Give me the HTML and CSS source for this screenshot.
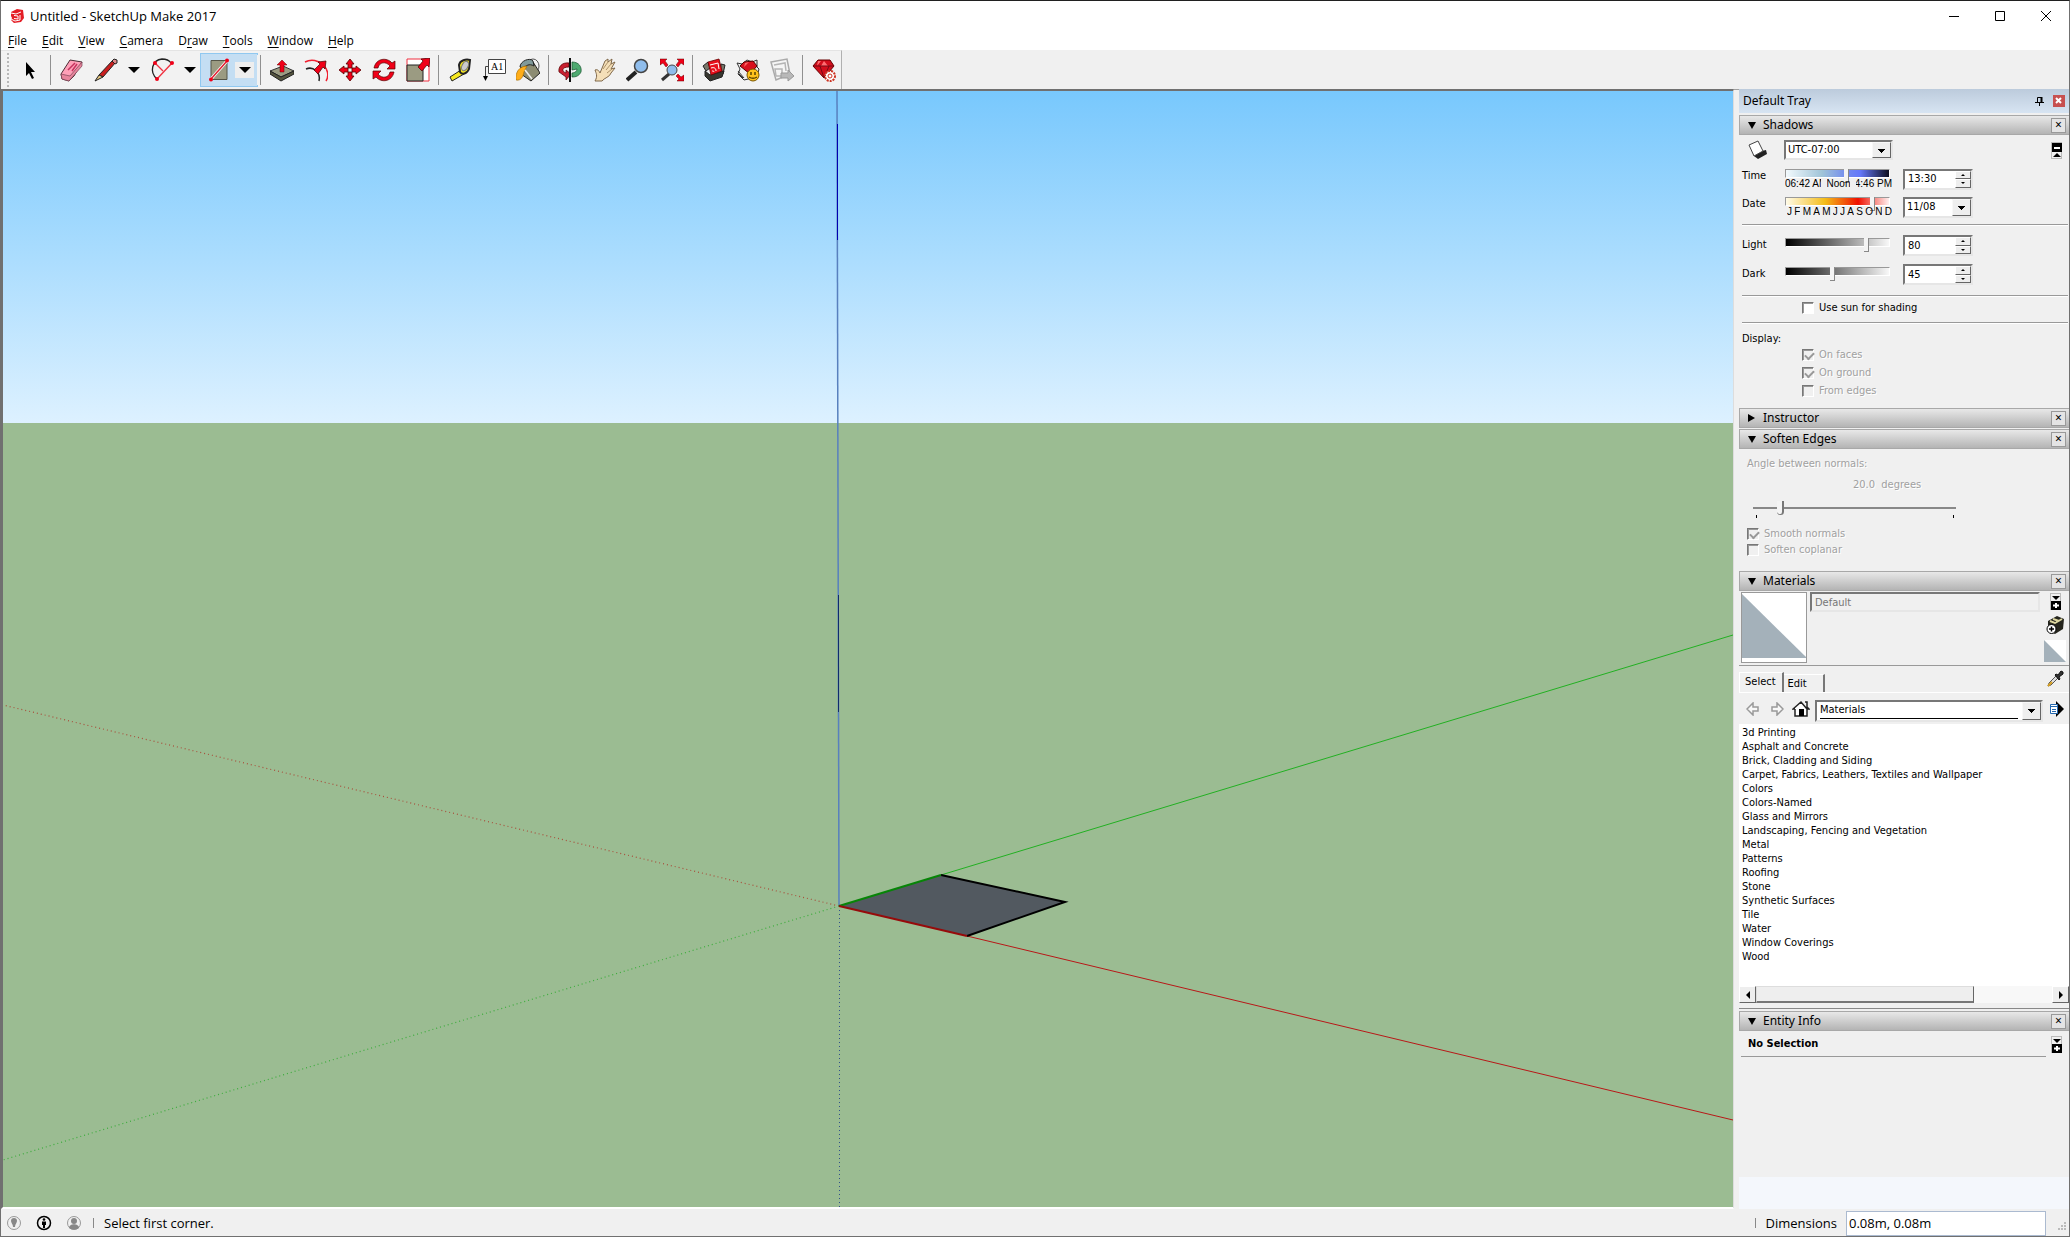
FILE: index.html
```
<!DOCTYPE html>
<html lang="en">
<head>
<meta charset="utf-8">
<title>Untitled - SketchUp Make 2017</title>
<link rel="stylesheet" href="styles.css">
</head>
<body>
<div class="window">
  <header class="titlebar">
    <svg class="logo" viewBox="0 0 14 14"><path fill="#e41e26" d="M1 3 7 0l6 1 1 8-3 4-7 1-3-3 1-2-1-2z"/><path fill="none" stroke="#fff" d="m1 4 5 1 5-2M4 6.500l4 .5v3l-4-.5M10 6v5M1 10l4 2 5-1"/></svg>
    <h1 class="title">Untitled - SketchUp Make 2017</h1>
    <div class="window-buttons">
      <button aria-label="Minimize"><svg viewBox="0 0 12 12"><path d="M1 6.500h10"/></svg></button>
      <button aria-label="Maximize"><svg viewBox="0 0 12 12"><path d="M1.500 1.500h9v9h-9z"/></svg></button>
      <button aria-label="Close"><svg viewBox="0 0 12 12"><path d="m1 1 10 10M11 1 1 11"/></svg></button>
    </div>
  </header>

  <nav class="menubar">
    <button><u>F</u>ile</button><button><u>E</u>dit</button><button><u>V</u>iew</button><button><u>C</u>amera</button><button>D<u>r</u>aw</button><button><u>T</u>ools</button><button><u>W</u>indow</button><button><u>H</u>elp</button>
  </nav>

  <div class="toolbar-row">
    <div class="toolbar">
      <span class="grip"></span>
      <button class="tool" aria-label="Select"><svg viewBox="0 0 24 24"><path d="M8 4v14l3-3 3 6 2-1-3-6h4z"/></svg></button>
      <span class="sep"></span>
      <button class="tool" aria-label="Eraser"><svg viewBox="0 0 24 24"><path fill="#ffa0b8" stroke="#4a2a33" d="m1 16 9-14 12 2-8 14-5 5-7-2z"/><path fill="#e8859d" stroke="#7a4454" stroke-width=".7" d="m1 16 9 2 12-14v4L9 23l-7-2z"/><path fill="none" stroke="#c6335f" stroke-width="1.500" d="m8 12 7-7M12 13l5-7"/></svg></button>
      <button class="tool" aria-label="Line"><svg viewBox="0 0 24 24"><path fill="#c81e1e" stroke="#222" d="M5 17 19 2l3 2L9 19z"/><path fill="#e8c880" stroke="#222" d="m1 23 4-6 4 2z"/><path fill="#d88" stroke="#222" d="m18 3 2-2 3 1v3l-2 1z"/></svg></button>
      <button class="drop" aria-label="Line tools"></button>
      <button class="tool" aria-label="Arc"><svg viewBox="0 0 24 24"><path fill="none" stroke="#222" stroke-width="1.300" d="M7 21C-1 14 2 2 12 1c4 0 7 1 9 4"/><path fill="none" stroke="#f03040" stroke-width="1.300" d="m7 21 15-16M5 5l8 8"/><g fill="#f00018"><circle cx="5" cy="5" r="2"/><circle cx="22" cy="5" r="2"/><circle cx="7" cy="21" r="2"/></g></svg></button>
      <button class="drop" aria-label="Arc tools"></button>
      <div class="tool-active">
        <button class="tool" aria-label="Rectangle"><svg viewBox="0 0 24 24"><path fill="#9b9b82" stroke="#555548" d="M5 2.500h16v19H5z"/><path stroke="#fff" stroke-width="3" d="M5 21 21 3"/><path stroke="#e02030" stroke-width="1.500" d="M5 21 21 3"/><circle cx="5" cy="21.500" r="2" fill="#f00018"/><circle cx="21" cy="2.500" r="2" fill="#f00018"/></svg></button>
        <button class="drop" aria-label="Shape tools"></button>
      </div>
      <span class="sep"></span>
      <button class="tool" aria-label="Push/Pull"><svg viewBox="0 0 24 24"><path fill="#9b9b82" stroke="#333" d="m0 13 13-5 11 5-13 6z"/><path fill="#55553f" stroke="#222" d="M0 13v3l11 7 13-7v-3l-13 6z"/><path fill="#f00018" stroke="#600" stroke-width=".5" d="M12 2 7 7h3v7h4V7h3z"/></svg></button>
      <button class="tool" aria-label="Offset"><svg viewBox="0 0 24 24"><path fill="none" stroke="#f02030" stroke-width="1.500" d="M1 4c13-7 28 8 21 19"/><path fill="none" stroke="#222" stroke-width="1.500" d="M2 11c7-3 15 3 13 12"/><path fill="#f00018" stroke="#400" stroke-width=".7" d="m22 3-8 1 2 2-6 6 4 4 5-7 2 2z"/></svg></button>
      <button class="tool" aria-label="Move"><svg viewBox="0 0 24 24"><path fill="#f00018" stroke="#500" stroke-width=".8" d="m12 1 4 5h-2v4h-4V6H8zM12 23l4-5h-2v-4h-4v4H8zM1 12l5-4v2h4v4H6v2zM23 12l-5-4v2h-4v4h4v2z"/></svg></button>
      <button class="tool" aria-label="Rotate"><svg viewBox="0 0 24 24"><path fill="#f00018" stroke="#500" stroke-width=".7" d="M2 10C4 0 15-1 20 5l3-2v8h-8l3-3C14 3 7 4 6 10zM22 14c-2 10-13 11-18 5l-3 2v-8h8l-3 3c4 5 11 4 12-2z"/></svg></button>
      <button class="tool" aria-label="Scale"><svg viewBox="0 0 24 24"><path fill="#fff" stroke="#f03040" d="M1 1h22v22H1z"/><path fill="#9b9b82" stroke="#222" d="M1 7h16v16H1z"/><path fill="#f00018" stroke="#400" stroke-width=".7" d="m24 0-9 1 2 2-5 6 4 4 5-6 2 2z"/></svg></button>
      <span class="sep"></span>
      <button class="tool" aria-label="Tape Measure"><svg viewBox="0 0 24 24"><path fill="#f6e820" stroke="#222" d="m2 19 11-7 3 4-12 7z"/><path fill="#f6e820" stroke="#222" stroke-width="2" d="M11 7c1-5 7-6 11-5l-1 9c-2 5-7 6-9 3z"/><ellipse cx="17" cy="8" rx="3" ry="5" transform="rotate(25 17 8)" fill="#ccc" stroke="#777"/></svg></button>
      <button class="tool" aria-label="Text"><svg viewBox="0 0 24 24"><path fill="#fff" stroke="#444" d="M6.500 1.500h17v14h-17z"/><path fill="none" stroke="#444" d="M6 8.500H3.500V19"/><path d="M1 18h5l-2.500 5z"/><text x="9" y="12" font-family="Liberation Serif" font-size="10">A1</text></svg></button>
      <button class="tool" aria-label="Paint Bucket"><svg viewBox="0 0 24 24"><ellipse cx="17" cy="8" rx="6" ry="7" fill="none" stroke="#555"/><path fill="#8c8c72" stroke="#222" d="m5 8 12-4 7 11-9 8-10-7z"/><path fill="#809a9a" stroke="#222" d="M4 9C4 3 14-1 17 3l1 5c-5-3-8 0-11 2z"/><path fill="#ffad18" stroke="#9b6500" stroke-width=".6" d="M11 8C3 8-1 15 0 22c5 1 7-3 8-8z"/><path stroke="#eee" stroke-width="1.500" d="m9 12 7 9"/></svg></button>
      <span class="sep"></span>
      <button class="tool" aria-label="Orbit"><svg viewBox="0 0 24 24"><path fill="#c82030" stroke="#500" stroke-width=".7" d="M11 5C4 4 0 9 1 14l7 5v3l5-6-5-4v3C3 13 4 9 11 9z"/><path fill="#4eaa70" stroke="#17552e" stroke-width=".7" d="M14 4c7 0 10 5 9 10-2 4-5 5-9 5v-4c3 0 5-2 5-4l-5 1z"/><path stroke="#111" stroke-width="2" d="M12 0v24"/></svg></button>
      <button class="tool" aria-label="Pan"><svg viewBox="0 0 24 24"><path fill="#f4dfb8" stroke="#80694b" d="M3 23c3-5 1-8 0-11 3-1 4 1 5 3L13 3l3-2v3l4-3-1 5 4-2-4 7 4-1-4 5c-1 4-7 5-9 8z"/><path stroke="#ad9269" fill="none" d="m11 11 5-7M14 12l5-6M15 15l5-4"/></svg></button>
      <button class="tool" aria-label="Zoom"><svg viewBox="0 0 24 24"><path stroke="#222" stroke-width="4" d="m1 22 9-8"/><circle cx="15" cy="8" r="6.500" fill="#8fbdec" stroke="#444" stroke-width="1.500"/></svg></button>
      <button class="tool" aria-label="Zoom Extents"><svg viewBox="0 0 24 24"><path stroke="#333" stroke-width="3" d="m2 22 7-6"/><circle cx="12" cy="12" r="5" fill="#8fbdec" stroke="#444"/><path fill="#f00018" stroke="#600" stroke-width=".5" d="M0 1h7L5 3l3 4-2 2-3-4-3 2zM24 1h-7l2 2-3 4 2 2 3-4 3 2zM24 23h-7l2-2-3-3 2-2 3 3 3-2z"/></svg></button>
      <span class="sep"></span>
      <button class="tool" aria-label="3D Warehouse"><svg viewBox="0 0 24 24"><path fill="#77776a" stroke="#222" d="m1 8 5-4 2 6-4 3zM19 6l4 1-2 9-3-1z"/><path fill="#383830" stroke="#222" d="m3 13 5 4 14-4-2 6-12 4-5-5z"/><path fill="#e8101c" stroke="#600" stroke-width=".8" d="m6 4 11-3 3 12-11 4z"/><path fill="none" stroke="#fff" d="m8 7 8-2 1 6M9 10c3-1 5 0 5 3M10 13c1 0 2 0 2 1"/></svg></button>
      <button class="tool" aria-label="Extension Warehouse"><svg viewBox="0 0 24 24"><path fill="#eee" stroke="#333" d="m1 5 5 1 5-4 5 2 5-2v7l2 2-2 8-13 3-6-6 2-5z"/><path fill="#d8101e" stroke="#500" d="m4 8 4-4 9-1 4 5-7 8z"/><path fill="#f66" d="m9 5-1 4 5-5z"/><path stroke="#333" d="m2 13 6 7M3 16l4 4"/><circle cx="17" cy="17" r="6" fill="#ffc21c" stroke="#7a5700"/><path fill="none" stroke="#5a4300" stroke-width="1.500" d="M15 14v3M19 14v3M13 19c3 2 5 2 8 0"/></svg></button>
      <button class="tool" aria-label="Send to LayOut"><svg viewBox="0 0 24 24"><path fill="#f5f5f5" stroke="#aaa" stroke-width="1.500" d="m1 4 16-3 3 15-14 6z"/><path fill="none" stroke="#b5b5b5" stroke-width="1.500" d="m4 7 11-2 1 8M5 11h7v7H6z"/><path fill="#b8b8b8" stroke="#999" d="M11 15h7v-3l6 6-6 5v-3h-7z"/></svg></button>
      <span class="sep"></span>
      <button class="tool" aria-label="Extension Manager"><svg viewBox="0 0 24 24"><path fill="#d20e1c" stroke="#600" d="m1 8 5-6h12l4 6-10 12z"/><path fill="#ff6d72" d="m6 3-1 5 4-5zM12 3l-3 5h7z"/><path fill="none" stroke="#780b14" d="M1 8h21M8 8l4 12 5-12"/><circle cx="18" cy="18" r="5" fill="#fff" stroke="#c32" stroke-width="2" stroke-dasharray="2 1"/><circle cx="18" cy="18" r="2" fill="none" stroke="#c32"/></svg></button>
    </div>
  </div>

  <main class="workspace">
    <section class="viewport" aria-label="Model view">
      <svg class="scene" viewBox="0 0 1730 1116" preserveAspectRatio="none">
        <defs><linearGradient id="sky" x1="0" y1="0" x2="0" y2="1"><stop offset="0" stop-color="#78c8fd"/><stop offset="1" stop-color="#ddf1ff"/></linearGradient></defs>
        <path fill="url(#sky)" d="M0 0h1730v332H0z"/>
        <path fill="#9bbc92" d="M0 332h1730v784H0z"/>
        <path stroke="#5880be" stroke-width="1.500" d="m834 0 2 815"/>
        <path stroke="#0000b0" d="M834.500 33v116"/>
        <path stroke="#102a6c" d="M835.500 504v117"/>
        <path stroke="#30508a" stroke-dasharray="1 3" d="M836.500 815v301"/>
        <path stroke="#a8503c" stroke-width="1.200" stroke-dasharray="1 3" d="M836 815 0 614"/>
        <path stroke="#3cac3c" stroke-width="1.200" stroke-dasharray="1 3" d="M836 815 0 1069"/>
        <path stroke="#22b022" d="m938 784 792-240"/>
        <path stroke="#b81818" d="m964 845 766 184"/>
        <path fill="#525960" d="m836 815 102-31 124 27-98 34z"/>
        <path fill="none" stroke="#000" stroke-width="2" d="m938 784 124 27-98 34"/>
        <path stroke="#078507" stroke-width="2" d="m836 815 102-31"/>
        <path stroke="#960b0b" stroke-width="2" d="m836 815 128 30"/>
      </svg>
    </section>

    <aside class="tray">
      <div class="tray-head"><h2>Default Tray</h2>
        <button class="pin" aria-label="Auto hide"><svg viewBox="0 0 10 10"><path fill="none" stroke="#000" d="M2.500 6V1.500h4V6M0 6.500h9M4.500 7v3"/><path stroke="#000" stroke-width="2" d="M6.500 1v5"/></svg></button>
        <button class="tray-close" aria-label="Close tray"><svg viewBox="0 0 8 8"><path stroke="#fff" stroke-width="2" d="m1 1 5 5M6 1 1 6"/></svg></button>
      </div>

      <section class="panel">
        <h3 class="panel-head"><button class="fold">Shadows</button><button class="x" aria-label="Close Shadows">×</button></h3>
        <div class="shadows">
          <div class="field-row first">
            <svg class="shadow-icon" viewBox="0 0 20 20"><path fill="#222" d="m5 13 13-3 1 4-9 5-4-3z"/><path fill="#fff" stroke="#444" d="m1 5 9-4 5 10-9 5z"/></svg>
            <span class="combo zone"><select aria-label="Time zone"><option>UTC-07:00</option></select></span>
            <button class="mini detail-toggle" aria-label="Hide details"><svg viewBox="0 0 10 16"><path d="M0 0h10v9H0z"/><path stroke="#fff" stroke-width="2" d="M2 5h6"/><path d="m5 10 4 4H1z"/></svg></button>
          </div>
          <div class="field-row"><label for="time">Time</label>
            <span class="scale"><input class="range time" id="time" type="range" value="59"><span class="marks"><i>06:42 AM</i><i>Noon</i><i class="end">04:46 PM</i></span></span>
            <span class="spin"><input aria-label="Time value" value="13:30"><button aria-label="Later"></button><button class="down" aria-label="Earlier"></button></span></div>
          <div class="field-row"><label for="date">Date</label>
            <span class="scale"><input class="range date" id="date" type="range" value="86"><span class="marks months"><i>J</i><i>F</i><i>M</i><i>A</i><i>M</i><i>J</i><i>J</i><i>A</i><i>S</i><i>O</i><i>N</i><i>D</i></span></span>
            <span class="combo day"><select aria-label="Date value"><option>11/08</option></select></span></div>
          <hr>
          <div class="field-row shade"><label for="light">Light</label>
            <span class="scale"><input class="range grey" id="light" type="range" value="80"></span>
            <span class="spin"><input aria-label="Light value" value="80"><button aria-label="More light"></button><button class="down" aria-label="Less light"></button></span></div>
          <div class="field-row shade"><label for="dark">Dark</label>
            <span class="scale"><input class="range grey" id="dark" type="range" value="45"></span>
            <span class="spin"><input aria-label="Dark value" value="45"><button aria-label="More dark"></button><button class="down" aria-label="Less dark"></button></span></div>
          <hr>
          <label class="check sun"><input type="checkbox">Use sun for shading</label>
          <hr>
          <p class="display">Display:</p>
          <label class="check off"><input type="checkbox" checked disabled>On faces</label>
          <label class="check off"><input type="checkbox" checked disabled>On ground</label>
          <label class="check off"><input type="checkbox" disabled>From edges</label>
        </div>
      </section>

      <section class="panel">
        <h3 class="panel-head"><button class="fold closed">Instructor</button><button class="x" aria-label="Close Instructor">×</button></h3>
      </section>

      <section class="panel">
        <h3 class="panel-head"><button class="fold">Soften Edges</button><button class="x" aria-label="Close Soften Edges">×</button></h3>
        <div class="soften off">
          <label for="angle">Angle between normals:</label>
          <output for="angle">20.0&nbsp; degrees</output>
          <div class="angle"><input id="angle" type="range" value="12" disabled></div>
          <label class="check"><input type="checkbox" checked disabled>Smooth normals</label>
          <label class="check"><input type="checkbox" disabled>Soften coplanar</label>
        </div>
      </section>

      <section class="panel">
        <h3 class="panel-head"><button class="fold">Materials</button><button class="x" aria-label="Close Materials">×</button></h3>
        <div class="material">
          <div class="swatch"><svg viewBox="0 0 64 66" preserveAspectRatio="none"><path fill="#a4b1ba" d="m0 0 64 65v1H0z"/></svg></div>
          <input class="material-name" aria-label="Material name" value="Default" disabled>
          <div class="side">
            <button class="mini" aria-label="Secondary pane"><svg viewBox="0 0 10 16"><path d="M1 2h8L5 6zM0 7h10v9H0z"/><path stroke="#fff" stroke-width="2" d="M2 11.500h6M5 9v5"/></svg></button>
            <button class="plain" aria-label="Create material"><svg viewBox="0 0 18 18"><path fill="#25251d" d="m2 5 9-5 7 3-1 10-8 5-7-3z"/><path stroke="#dcd6a0" stroke-width="2" d="m4 5 5 2 7-4M7 3l6 2"/><circle cx="5.500" cy="13" r="4.500" fill="#fff" stroke="#000"/><path stroke="#000" stroke-width="1.500" d="M3 13h5M5.500 10.500v5"/></svg></button>
            <button class="plain big" aria-label="Default material"><svg viewBox="0 0 22 22"><path fill="#fff" d="M0 0h22v22H0z"/><path fill="#a4b1ba" d="m0 0 22 22H0z"/></svg></button>
          </div>
        </div>
        <div class="tabs"><button class="tab current">Select</button><button class="tab">Edit</button>
          <button class="plain pick" aria-label="Sample paint"><svg viewBox="0 0 18 18"><path fill="#ddd" stroke="#555" d="m2 16 1-3 7-7 2 2-7 7z"/><path stroke="#d8a020" stroke-width="2" d="m2 16 4-4"/><path fill="#333" stroke="#111" d="m9 5 1-1 2 1 3-4 2 1v2l-4 3 1 2-1 1z"/></svg></button></div>
        <div class="browse">
          <button class="plain" aria-label="Back"><svg viewBox="0 0 14 14"><path fill="#f8f8f8" stroke="#999" stroke-width="1.500" d="m1 7 6-6v4h5v4H7v4z"/></svg></button>
          <button class="plain" aria-label="Forward"><svg viewBox="0 0 14 14"><path fill="#f8f8f8" stroke="#999" stroke-width="1.500" d="M13 7 7 1v4H2v4h5v4z"/></svg></button>
          <button class="plain home" aria-label="In model"><svg viewBox="0 0 18 18"><path fill="#fff" stroke="#222" stroke-width="1.500" d="M3 9v7h12V9L9 2 1 9h2M13 2h2v5l2 2h-2"/><path d="M7 9h5v7H7z"/></svg></button>
          <span class="combo library"><select aria-label="Library"><option>Materials</option></select></span>
          <button class="plain more" aria-label="Details"><svg viewBox="0 0 16 16"><path d="M7 0v4H4v9h3v3l8-8z"/><path fill="#fff" stroke="#2468b0" d="M1.500 3.500h7v9h-7z"/><path stroke="#2468b0" d="M1 5.500h8M3 8.500h4M3 10.500h4"/></svg></button>
        </div>
        <div class="library-box">
          <ul class="library-list">
            <li>3d Printing</li><li>Asphalt and Concrete</li><li>Brick, Cladding and Siding</li><li>Carpet, Fabrics, Leathers, Textiles and Wallpaper</li><li>Colors</li><li>Colors-Named</li><li>Glass and Mirrors</li><li>Landscaping, Fencing and Vegetation</li><li>Metal</li><li>Patterns</li><li>Roofing</li><li>Stone</li><li>Synthetic Surfaces</li><li>Tile</li><li>Water</li><li>Window Coverings</li><li>Wood</li>
          </ul>
          <div class="scrollbar"><button aria-label="Scroll left"></button><span class="thumb"></span><button class="right" aria-label="Scroll right"></button></div>
        </div>
      </section>

      <section class="panel entity">
        <h3 class="panel-head"><button class="fold">Entity Info</button><button class="x" aria-label="Close Entity Info">×</button></h3>
        <div class="entity-row"><strong>No Selection</strong><button class="mini" aria-label="Show details"><svg viewBox="0 0 10 16"><path d="M1 2h8L5 6zM0 7h10v9H0z"/><path stroke="#fff" stroke-width="2" d="M2 11.500h6M5 9v5"/></svg></button></div>
      </section>
      <div class="tray-foot"></div>
    </aside>
  </main>

  <footer class="statusbar">
    <button class="status-icon" aria-label="Geo-location"><svg viewBox="0 0 16 16"><circle cx="8" cy="8" r="6.500" fill="none" stroke="#999"/><path fill="#888" d="M8 3a3 3 0 0 0-3 3c0 2 2 3 2 6h2c0-3 2-4 2-6a3 3 0 0 0-3-3"/></svg></button>
    <button class="status-icon" aria-label="Credits"><svg viewBox="0 0 16 16"><circle cx="8" cy="8" r="6.500" fill="none" stroke="#000" stroke-width="1.500"/><circle cx="8" cy="4.500" r="1.300"/><path d="M6 6.500h4V10H9v3H7v-3H6z"/></svg></button>
    <button class="status-icon" aria-label="Sign in"><svg viewBox="0 0 16 16"><circle cx="8" cy="8" r="6.500" fill="none" stroke="#999"/><circle cx="8" cy="6" r="3" fill="#888"/><path fill="#888" d="M3 13c0-5 10-5 10 0-3 2-7 2-10 0"/></svg></button>
    <span class="bar"></span>
    <span class="hint">Select first corner.</span>
    <span class="bar right"></span>
    <label for="dims">Dimensions</label>
    <input id="dims" value="0.08m, 0.08m">
    <svg class="corner" viewBox="0 0 9 9"><path fill="#bbb" d="M6 0h2v2H6zM6 3h2v2H6zM3 3h2v2H3zM6 6h2v2H6zM3 6h2v2H3zM0 6h2v2H0z"/></svg>
  </footer>
</div>
</body>
</html>
```

FILE: styles.css
```
* { box-sizing: border-box; }
body { margin: 0; background: #f0f0f0; color: #000; font: 11px/14px "DejaVu Sans Condensed", "DejaVu Sans", sans-serif; }
button, input, select { margin: 0; padding: 0; border: 0; border-radius: 0; background: none; color: inherit; font: inherit; }
button { display: grid; place-items: center; }
h1, h2, h3, p, ul { margin: 0; padding: 0; font-weight: normal; }
svg { display: block; }

.window { display: flex; flex-direction: column; min-height: 100vh; border: 1px solid #707070; border-top-color: #202020; }

.titlebar, .menubar { font: 13px/18px "Open Sans", "Noto Sans", sans-serif; background: #fff; }
.titlebar { display: flex; align-items: center; height: 30px; padding-left: 9px; gap: 6px; }
.logo { width: 14px; height: 14px; }
.title { font: inherit; }
.window-buttons { display: flex; margin-left: auto; }
.window-buttons button { width: 46px; height: 30px; }
.window-buttons svg { width: 12px; height: 12px; fill: none; stroke: #000; }
.menubar { display: flex; height: 19px; padding: 1px 0 0 7px; gap: 15px; font-size: 12px; }
.menubar button { display: block; }
.menubar u { text-underline-offset: 2px; }

.toolbar-row { height: 40px; border-bottom: 1px solid #a0a0a0; margin-bottom: -1px; }
.toolbar { display: flex; align-items: center; width: max-content; height: 39px; border-right: 1px solid #b0b0b0; border-top: 1px solid #e4e4e4; background: #f2f2f2; }
.grip { width: 2px; height: 34px; margin: 0 4px 0 6px; border-left: 2px dotted #b8b8b8; }
.tool { width: 34px; height: 32px; }
.tool svg { width: 24px; height: 24px; }
.drop { width: 22px; height: 32px; }
.drop::before { content: ""; border: 6px solid transparent; border-top-color: #000; border-bottom: 0; }
.tool-active { display: flex; outline: 1px solid #90c8f0; background: #c4def3; }
.tool-active .drop { height: 16px; margin: 8px 3px 8px 0; width: 19px; background: #eee; }
.sep { width: 8px; height: 30px; border-left: 3px solid #f2f2f2; background: linear-gradient(90deg, #909090 1px, transparent 1px); }

.workspace { flex: 1; display: grid; grid-template-columns: minmax(0, 1fr) 335px; }
.viewport { position: relative; border: 2px solid #707070; border-right-color: #ddd; border-bottom-color: #fff; border-width: 2px 1px 2px 2px; }
.scene { position: absolute; width: 100%; height: 100%; fill: none; }

.tray { display: flex; flex-direction: column; padding-left: 5px; }
.tray-head { display: flex; align-items: center; height: 24px; padding: 0 4px; gap: 8px; background: linear-gradient(#bccbdc, #d7e4f2); margin-bottom: 2px; }
.tray-head h2 { flex: 1; font: 12px/16px "Noto Sans", sans-serif; }
.pin svg { width: 10px; height: 10px; }
.tray-close { width: 12px; height: 12px; background: #c75050; }
.tray-close svg { width: 8px; height: 8px; }

.panel-head { display: flex; align-items: center; height: 20px; padding-right: 3px; border: 1px solid #a8a8a8; border-right: 0; background: linear-gradient(#e8e8e8, #b4b4b4); font: 12px/16px "Noto Sans", sans-serif; }
.fold { display: flex; align-items: center; flex: 1; gap: 7px; padding-left: 8px; }
.fold::before { content: ""; border: 4px solid transparent; border-top: 7px solid #000; border-bottom: 0; }
.fold.closed::before { border: 4px solid transparent; border-left: 7px solid #000; border-right: 0; margin-right: 1px; }
.x { width: 15px; height: 15px; border: 1px solid #999; background: #e4e4e4; line-height: 12px; }

.shadows { height: 273px; padding: 0 1px 0 3px; }
.field-row { display: flex; align-items: center; height: 29px; }
.field-row > label { width: 43px; height: 20px; }
.field-row + .field-row { height: 28px; }
.field-row.first { height: 30px; }
.field-row + .shade { height: 29px; }
.shadow-icon { width: 20px; height: 20px; margin: 0 16px 0 6px; }
hr { height: 2px; margin: 4px 0; border: 0; border-top: 1px solid #999; border-bottom: 1px solid #fff; }
.field-row + hr { margin: 3px 0 5px; }
.shade + hr { margin: 6px 0 1px; }
.combo { display: flex; background: #fff; border: 2px solid; border-color: #777 #e6e6e6 #e6e6e6 #777; }
.combo select { flex: 1; min-width: 0; padding-left: 2px; appearance: none; opacity: 1; }
.combo::after { content: ""; width: 17px; flex: none; border: 1px solid; border-color: #f8f8f8 #666 #666 #f8f8f8; background: linear-gradient(#000, #000) 5px 6px / 7px 1px no-repeat, linear-gradient(#000, #000) 6px 7px / 5px 1px no-repeat, linear-gradient(#000, #000) 7px 8px / 3px 1px no-repeat, linear-gradient(#000, #000) 8px 9px / 1px 1px no-repeat, #eee; }
.zone { width: 109px; height: 20px; }
.day { width: 70px; height: 21px; }
.mini { width: 11px; height: 17px; border: 1px solid #bbb; }
.mini svg { width: 10px; height: 16px; }
.detail-toggle { margin: 0 6px 0 auto; }

.scale { display: flex; flex-direction: column; width: 105px; height: 20px; margin-right: 13px; }
.range { appearance: none; width: 105px; height: 9px; flex: none; border: 1px solid; border-color: #999 #fff #fff #999; }
.range::-webkit-slider-thumb { appearance: none; width: 5px; height: 14px; margin-top: 5px; background: #f4f4f4; border-right: 1px solid #888; border-bottom: 1px solid #888; }
.time { background: linear-gradient(90deg, #f3fafd, #a0c4d8 35%, #7088f0 60%, #6478fa 72%, #101020); }
.date { background: linear-gradient(90deg, #fffbe8, #f4bc18 38%, #f01000 70%, #fff0f0); }
.grey { background: linear-gradient(90deg, #000, #f8f8f8); }
.marks { display: flex; justify-content: space-between; width: 107px; font: 10px/12px "Liberation Sans", sans-serif; height: 12px; white-space: nowrap; }
.marks i { font-style: normal; overflow: hidden; }
.marks:not(.months) i:first-child { width: 36px; }
.marks .end { width: 36px; display: flex; justify-content: flex-end; }
.months { padding: 0 0 0 2px; }
.spin { display: grid; grid-template: 1fr 1fr / 1fr 16px; width: 70px; height: 21px; background: #fff; border: 2px solid; border-color: #777 #e6e6e6 #e6e6e6 #777; }
.spin input { grid-row: 1 / 3; min-width: 0; padding-left: 3px; }
.spin button { grid-column: 2; border: 1px solid; border-color: #fff #666 #666 #fff; background: #eee; }
.spin button::before { content: ""; border: 2px solid transparent; border-bottom-color: #000; border-top: 0; }
.spin .down::before { border: 2px solid transparent; border-top-color: #000; border-bottom: 0; }
.shade > label, .shade .scale { height: 16px; }

.check { display: flex; align-items: center; gap: 5px; height: 18px; }
.check input { appearance: none; width: 12px; height: 12px; border: 1px solid; border-color: #777 #fff #fff #777; box-shadow: inset 1px 1px #999; background: #fff; }
.check input:disabled { background: #f0f0f0; }
.check input:checked::before { content: ""; display: block; width: 7px; height: 4px; margin: 2px 0 0 2px; border: 2px solid #999; border-top: 0; border-right: 0; transform: rotate(-45deg); }
.shadows .check { padding-left: 60px; }
.shadows .sun { height: 20px; }
.display { height: 14px; margin-top: 8px; }
.off { color: #a0a0a0; text-shadow: 1px 1px #fff; }

.panel:has(.closed) { margin-bottom: 1px; }
.soften { height: 122px; padding: 4px 8px 0; }
.soften > label:first-child, .soften output { display: block; height: 21px; line-height: 21px; }
.soften output { padding-left: 106px; }
.soften .check { height: 16px; }
.angle { height: 31px; padding: 5px 0 0 6px; }
.angle input { display: block; appearance: none; width: 203px; height: 18px; background: linear-gradient(#888, #888) 0 7px / 100% 2px no-repeat, linear-gradient(#000, #000) 3px 100% / 1px 3px no-repeat, linear-gradient(#000, #000) 200px 100% / 1px 3px no-repeat; }
.angle input::-webkit-slider-thumb { appearance: none; width: 7px; height: 14px; margin-top: -2px; background: #f4f4f4; border-right: 2px solid #777; border-bottom: 1px solid #777; border-radius: 0 0 4px 4px; }

.material { display: flex; height: 75px; padding: 1px 2px 0; gap: 3px; border-bottom: 1px solid #999; }
.swatch { width: 66px; height: 71px; padding: 1px 0 4px; border: 1px solid #999; background: #fff; }
.swatch svg { width: 64px; height: 64px; }
.material-name { flex: 1; min-width: 0; height: 20px; padding-left: 3px; color: #777; border: 2px solid; border-color: #777 #e6e6e6 #e6e6e6 #777; }
.side { display: flex; flex-direction: column; align-items: center; gap: 6px; width: 24px; padding-top: 1px; }
.plain svg { width: 18px; height: 18px; }
.big svg { width: 22px; height: 22px; }
.tabs { display: flex; align-items: flex-end; height: 27px; border-bottom: 1px solid #fff; }
.tab { height: 18px; padding: 0 16px 0 4px; border-top: 1px solid #fff; border-right: 2px solid #777; }
.tab.current { height: 20px; padding: 0 6px 2px 5px; border-left: 1px solid #fff; }
.pick { margin: 0 5px 4px auto; }
.browse { display: flex; align-items: center; height: 31px; padding: 0 4px 0 7px; gap: 10px; }
.browse svg { width: 14px; height: 14px; }
.browse .home svg { width: 18px; height: 18px; }
.browse .home { margin: 0 -5px 0 -2px; }
.browse .more svg { width: 16px; height: 16px; }
.browse .more { margin-left: -4px; }
.library { flex: 1; height: 22px; margin-top: 5px; }
.library select { margin: 0 4px 1px 3px; padding: 0; border-bottom: 1px solid #000; }

.library-box { padding-bottom: 5px; border-bottom: 1px solid #888; }
.library-list { height: 262px; padding: 2px 3px; list-style: none; background: #fff; }
.scrollbar { display: flex; height: 17px; background: #f8f8f8; }
.scrollbar button { width: 17px; border: 1px solid; border-color: #fff #666 #666 #fff; background: #eee; }
.scrollbar button::before { content: ""; border: 4px solid transparent; border-right-color: #000; border-left: 0; }
.scrollbar .right { margin-left: auto; }
.scrollbar .right::before { border: 4px solid transparent; border-left-color: #000; border-right: 0; }
.thumb { width: 66%; border: 1px solid; border-color: #ddd #666 #777 #ddd; border-bottom-width: 2px; background: #eee; }

.entity { flex: 1; padding-top: 2px; }
.entity-row { display: flex; align-items: center; justify-content: space-between; height: 26px; margin-left: 2px; padding: 0 7px 0 7px; background: linear-gradient(#999, #999) 0 100% / calc(100% - 23px) 1px no-repeat; }
.tray-foot { height: 32px; background: #f4f7fc; }

.statusbar { display: flex; align-items: center; height: 27px; padding-left: 5px; font: 13px/18px "Open Sans", "Noto Sans", sans-serif; }
.status-icon { width: 16px; margin-right: 14px; }
.status-icon svg { width: 16px; height: 16px; }
.bar { width: 1px; height: 10px; margin: 0 10px 0 -3px; background: #888; }
.bar.right { margin-left: auto; }
.statusbar input { width: 200px; height: 25px; margin: 1px 12px 0 9px; padding-left: 2px; border: 1px solid #abbad0; background: #fff; }
.corner { width: 9px; height: 9px; margin: 8px 2px 0 0; }
```
